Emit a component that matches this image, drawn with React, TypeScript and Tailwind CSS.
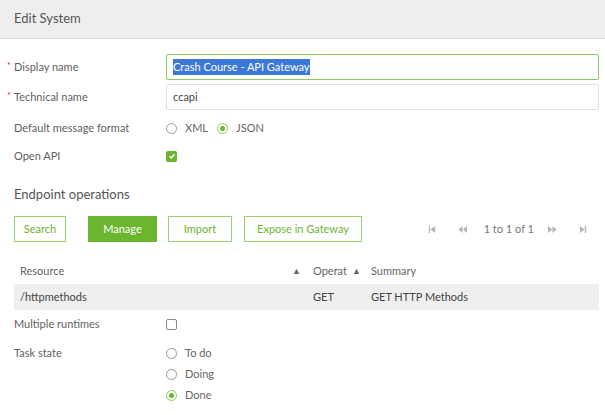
import React from "react";

function Radio({ checked, label }: { checked?: boolean; label: string }) {
  return (
    <div className="flex items-center gap-[8px]">
      <span
        className={`flex h-[11px] w-[11px] items-center justify-center rounded-full border ${
          checked ? "border-[#8fca5e]" : "border-[#9a9a9a]"
        }`}
      >
        {checked && <span className="h-[5px] w-[5px] rounded-full bg-[#6cb52f]" />}
      </span>
      <span className="text-[#666]">{label}</span>
    </div>
  );
}

function Arrow({ d }: { d: string }) {
  return (
    <svg width="9" height="9" viewBox="0 0 10 10" className="fill-[#b5b5b5]">
      <path d={d} />
    </svg>
  );
}

function Required() {
  return <span className="w-[7px] -translate-y-[1px] text-[9px] text-[#c0392b]">*</span>;
}

export default function App() {
  return (
    <div
      className="h-[415px] w-[605px] overflow-hidden bg-white text-[11px] text-[#5f5f5f]"
      style={{ fontFamily: "Lato, 'Noto Sans', sans-serif" }}
    >
      <div className="flex h-[39px] items-center border-b border-[#dcdcdc] bg-[#eeeeee] px-[14px] text-[13px] text-[#555]">
        Edit System
      </div>

      <div className="pl-[7px] pr-[6px]">
        <div className="mt-[15px] flex h-[26px] items-center">
          <div className="flex w-[159px] items-center">
            <Required />
            Display name
          </div>
          <div className="flex h-full flex-1 items-center rounded-[2px] border border-[#8fca5e] px-[6px]">
            <span className="bg-[#3b78d8] text-white">Crash Course - API Gateway</span>
          </div>
        </div>

        <div className="mt-[4px] flex h-[26px] items-center">
          <div className="flex w-[159px] items-center">
            <Required />
            Technical name
          </div>
          <div className="flex h-full flex-1 items-center rounded-[2px] border border-[#e0e0e0] px-[6px] text-[#444]">
            ccapi
          </div>
        </div>

        <div className="mt-[4px] flex h-[28px] items-center pl-[7px]">
          <div className="w-[152px]">Default message format</div>
          <div className="flex items-center gap-[9px]">
            <Radio label="XML" />
            <Radio checked label="JSON" />
          </div>
        </div>

        <div className="flex h-[28px] items-center pl-[7px]">
          <div className="w-[152px]">Open API</div>
          <span className="flex h-[11px] w-[11px] items-center justify-center rounded-[2px] bg-[#6cb52f]">
            <svg width="8" height="8" viewBox="0 0 10 10">
              <path d="M2 5.2 L4.2 7.3 L8 2.8" stroke="white" strokeWidth="1.8" fill="none" />
            </svg>
          </span>
        </div>

        <div className="mt-[12px] flex h-[26px] items-center pl-[7px] text-[13px] text-[#555]">
          Endpoint operations
        </div>

        <div className="mt-[8px] flex h-[26px] items-center pl-[7px]">
          <button className="h-full w-[52px] border border-[#9bd06c] text-[#6cb52f]">Search</button>
          <button className="ml-[22px] h-full w-[69px] bg-[#6cb52f] text-white">Manage</button>
          <button className="ml-[11px] h-full w-[64px] border border-[#9bd06c] text-[#6cb52f]">Import</button>
          <button className="ml-[12px] h-full w-[118px] border border-[#9bd06c] text-[#6cb52f]">
            Expose in Gateway
          </button>
          <div className="ml-auto flex items-center text-[#777]">
            <Arrow d="M2 1h1.5v8H2z M9 1v8L4 5z" />
            <span className="ml-[22px]" />
            <Arrow d="M5 1v8L0.5 5z M10 1v8L5.5 5z" />
            <span className="ml-[17px]">1 to 1 of 1</span>
            <span className="ml-[14px]" />
            <Arrow d="M0 1v8l4.5-4z M5 1v8l4.5-4z" />
            <span className="ml-[22px]" />
            <Arrow d="M1 1v8l5-4z M6.5 1H8v8H6.5z" />
            <span className="w-[11px]" />
          </div>
        </div>

        <div className="mt-[16px] pl-[7px]">
          <div className="flex h-[26px] items-center text-[#666]">
            <div className="flex w-[293px] items-center pl-[6px] pr-[6px]">
              <span className="flex-1">Resource</span>
              <span className="text-[9px] text-[#666]">▲</span>
            </div>
            <div className="flex w-[58px] items-center pl-[6px]">
              <span className="flex-1">Operat</span>
              <span className="pr-[4px] text-[9px] text-[#666]">▲</span>
            </div>
            <div className="pl-[6px]">Summary</div>
          </div>
          <div className="flex h-[26px] items-center bg-[#efefef] text-[#444]">
            <div className="w-[293px] pl-[6px]">/httpmethods</div>
            <div className="w-[58px] pl-[6px]">GET</div>
            <div className="pl-[6px]">GET HTTP Methods</div>
          </div>
        </div>

        <div className="flex h-[28px] items-center pl-[7px]">
          <div className="w-[152px]">Multiple runtimes</div>
          <span className="h-[11px] w-[11px] rounded-[2px] border border-[#8a8a8a]" />
        </div>

        <div className="mt-[5px] flex pl-[7px]">
          <div className="flex h-[21px] w-[152px] items-center">Task state</div>
          <div className="flex flex-col">
            <div className="flex h-[21px] items-center">
              <Radio label="To do" />
            </div>
            <div className="flex h-[21px] items-center">
              <Radio label="Doing" />
            </div>
            <div className="flex h-[21px] items-center">
              <Radio checked label="Done" />
            </div>
          </div>
        </div>
      </div>
    </div>
  );
}
